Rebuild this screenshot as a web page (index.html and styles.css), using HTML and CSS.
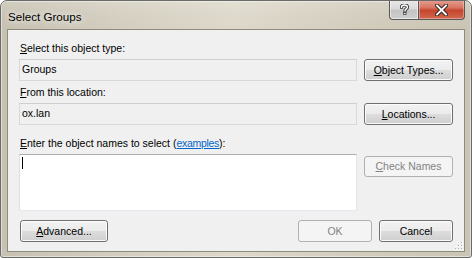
FILE: index.html
```html
<!DOCTYPE html>
<html>
<head>
<meta charset="utf-8">
<title>Select Groups</title>
<link rel="stylesheet" href="styles.css">
</head>
<body>
<div class="window">
  <div class="titlebar">
    <span class="title">Select Groups</span>
    <div class="caption-buttons">
      <div class="cap cap-help">
        <svg width="9" height="11" viewBox="0 0 9 11">
          <path d="M1.5 3.2 C1.5 1.5 2.8 1 4.5 1 C6.3 1 7.5 1.8 7.5 3.2 C7.5 4.8 5 5 5 6.8" fill="none" stroke="#3a3a3a" stroke-width="3.2" stroke-linecap="square"/>
          <rect x="3.2" y="8.2" width="3.2" height="2.6" fill="#3a3a3a"/>
          <path d="M1.5 3.2 C1.5 1.5 2.8 1 4.5 1 C6.3 1 7.5 1.8 7.5 3.2 C7.5 4.8 5 5 5 6.8" fill="none" stroke="#fff" stroke-width="1.4" stroke-linecap="square"/>
          <rect x="4.1" y="9" width="1.5" height="1.1" fill="#fff"/>
        </svg>
      </div>
      <div class="cap cap-close">
        <svg width="13" height="12" viewBox="0 0 13 12">
          <path d="M2 1.5 L11 10.5 M11 1.5 L2 10.5" stroke="#3b2a28" stroke-width="4" stroke-linecap="square"/>
          <path d="M2 1.5 L11 10.5 M11 1.5 L2 10.5" stroke="#fff" stroke-width="1.8" stroke-linecap="square"/>
        </svg>
      </div>
    </div>
  </div>
  <div class="client">
    <div class="label"><u>S</u>elect this object type:</div>
    <div class="row">
      <div class="field">Groups</div>
      <div class="btn side"><span><u>O</u>bject Types...</span></div>
    </div>
    <div class="label label2"><u>F</u>rom this location:</div>
    <div class="row">
      <div class="field">ox.lan</div>
      <div class="btn side"><span><u>L</u>ocations...</span></div>
    </div>
    <div class="label label3"><u>E</u>nter the object names to select (<a class="link">examples</a>):</div>
    <div class="row names">
      <div class="textarea"><span class="caret"></span></div>
      <div class="btn side disabled"><span><u>C</u>heck Names</span></div>
    </div>
    <div class="footer">
      <div class="btn adv"><span><u>A</u>dvanced...</span></div>
      <div class="spacer"></div>
      <div class="btn small disabled"><span>OK</span></div>
      <div class="btn small"><span>Cancel</span></div>
    </div>
    <svg class="grip" width="8" height="8" viewBox="0 0 8 8">
      <rect x="6" y="0" width="1" height="1" fill="#b0b0b0"/>
      <rect x="3" y="3" width="1" height="1" fill="#b0b0b0"/>
      <rect x="6" y="3" width="1" height="1" fill="#b0b0b0"/>
      <rect x="0" y="6" width="1" height="1" fill="#b0b0b0"/>
      <rect x="3" y="6" width="1" height="1" fill="#b0b0b0"/>
      <rect x="6" y="6" width="1" height="1" fill="#b0b0b0"/>
      <rect x="7" y="1" width="1" height="1" fill="#fff"/>
      <rect x="4" y="4" width="1" height="1" fill="#fff"/>
      <rect x="7" y="4" width="1" height="1" fill="#fff"/>
      <rect x="1" y="7" width="1" height="1" fill="#fff"/>
      <rect x="4" y="7" width="1" height="1" fill="#fff"/>
      <rect x="7" y="7" width="1" height="1" fill="#fff"/>
    </svg>
  </div>
</div>
</body>
</html>
```

FILE: styles.css
```css
html, body {
  margin: 0;
  padding: 0;
  background: #ffffff;
}

.window {
  box-sizing: border-box;
  width: 472px;
  height: 258px;
  border: 1px solid #6a6a68;
  border-radius: 7px 7px 3px 3px;
  background: linear-gradient(90deg, #c6c1b1 0%, #d3cebf 25%, #ddd8ca 50%, #d2cdbd 75%, #c9c4b4 100%);
  box-shadow: inset 0 0 0 1px rgba(255, 255, 255, 0.45);
  display: flex;
  flex-direction: column;
  overflow: hidden;
  font-family: "Liberation Sans", Arial, sans-serif;
  font-size: 10.5px;
  color: #000;
}

.titlebar {
  height: 28px;
  display: flex;
  justify-content: space-between;
  align-items: flex-start;
  padding-left: 7px;
  padding-right: 6px;
  background: linear-gradient(180deg, rgba(255,255,255,0.18) 0%, rgba(255,255,255,0.05) 50%, rgba(0,0,0,0) 100%);
}

.title {
  font-size: 11.6px;
  line-height: 14px;
  margin-top: 9px;
  color: #000;
  text-shadow: 0 0 6px rgba(255, 255, 255, 0.9), 0 0 10px rgba(255, 255, 255, 0.6);
}

.caption-buttons {
  display: flex;
  margin-top: -1px;
}

.cap {
  box-sizing: border-box;
  height: 20px;
  display: flex;
  align-items: center;
  justify-content: center;
  border: 1px solid #58585a;
  border-top: none;
}

.cap svg {
  display: block;
}

.cap-help {
  width: 29px;
  border-right: none;
  border-radius: 0 0 0 4px;
  background: linear-gradient(180deg, #e9e9e9 0%, #dadada 45%, #c4c4c4 55%, #cfcfcf 100%);
  box-shadow: inset 0 0 0 1px rgba(255,255,255,0.55);
}

.cap-close {
  width: 47px;
  border-radius: 0 0 4px 0;
  background: linear-gradient(180deg, #e4a193 0%, #d87562 40%, #c6452d 55%, #d26a4f 100%);
  box-shadow: inset 0 0 0 1px rgba(255,255,255,0.35);
}

.client {
  position: relative;
  box-sizing: border-box;
  margin: 0 6px 5px 6px;
  flex: 1;
  border: 1px solid #8e8a7c;
  background: #f0f0f0;
  padding: 12px 11px 0 11px;
  display: flex;
  flex-direction: column;
}

.label {
  line-height: 13px;
  height: 13px;
  padding-left: 1px;
  white-space: nowrap;
}

.label2 {
  margin-top: 5px;
}

.label3 {
  margin-top: 12px;
}

.link {
  color: #0066cc;
  text-decoration: underline;
  letter-spacing: -0.3px;
}

.row {
  display: flex;
  align-items: flex-start;
  gap: 7px;
  margin-top: 4px;
}

.field {
  box-sizing: border-box;
  width: 339px;
  height: 22px;
  border: 1px solid #d8d8d8;
  border-top-color: #cfcfcf;
  background: #f0f0f0;
  padding: 3px 2px 0 2px;
  line-height: 13px;
}

.textarea {
  box-sizing: border-box;
  width: 338px;
  height: 57px;
  background: #ffffff;
  border: 1px solid #e2e3ea;
  border-top-color: #abadb3;
  border-left-color: #dbdfe6;
  border-bottom-color: #e3e9ef;
  padding: 2px 0 0 2px;
}

.caret {
  display: block;
  width: 1px;
  height: 12px;
  background: #000;
}

.names .btn {
  margin-top: 2px;
  height: 21px;
}

.btn {
  box-sizing: border-box;
  height: 22px;
  display: flex;
  align-items: center;
  justify-content: center;
  border: 1px solid #707070;
  border-radius: 3px;
  background: linear-gradient(180deg, #f2f2f2 0%, #ebebeb 49%, #dddddd 51%, #cfcfcf 100%);
  box-shadow: inset 0 0 0 1px #fbfbfb;
  line-height: 13px;
  white-space: nowrap;
  color: #000;
}

.btn.side {
  width: 89px;
}

.btn.disabled {
  border-color: #adb2b5;
  background: #f4f4f4;
  box-shadow: none;
  color: #838383;
}

.footer {
  display: flex;
  align-items: flex-start;
  gap: 7px;
  margin-top: 9px;
  padding-left: 1px;
}

.btn.adv {
  width: 88px;
}

.btn.small {
  width: 74px;
}

.spacer {
  flex: 1;
}

.grip {
  position: absolute;
  right: 1px;
  bottom: 1px;
}
```
